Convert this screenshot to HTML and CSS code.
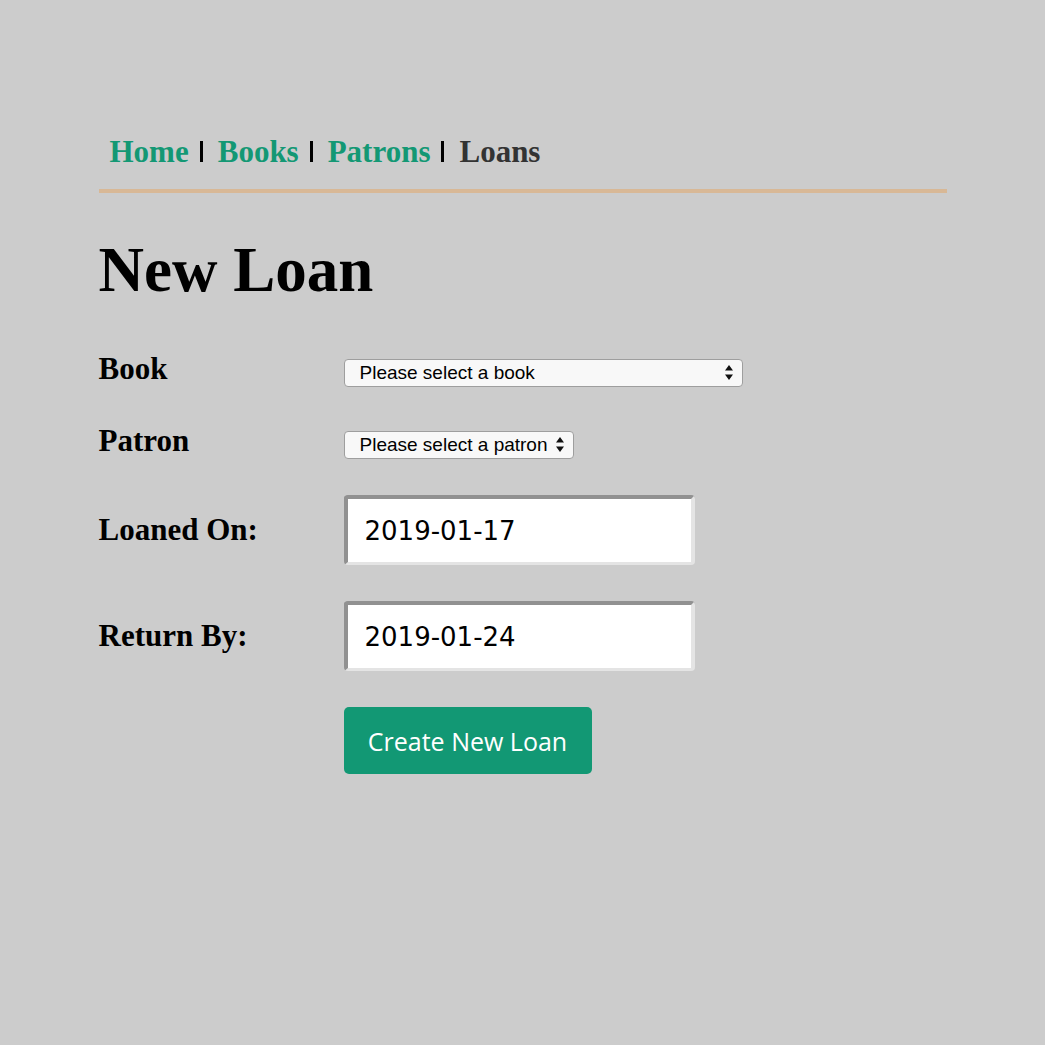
FILE: index.html
```html
<!DOCTYPE html>
<html lang="en">
<head>
<meta charset="utf-8">
<title>New Loan</title>
<link rel="stylesheet" href="styles.css">
</head>
<body>
<div class="container">
  <nav class="nav">
    <a class="nav-link" href="#">Home</a><span class="sep"></span>
    <a class="nav-link" href="#">Books</a><span class="sep"></span>
    <a class="nav-link" href="#">Patrons</a><span class="sep"></span>
    <a class="nav-link current" href="#">Loans</a>
  </nav>
  <h1 class="title">New Loan</h1>
  <form class="form">
    <label class="label" for="book">Book</label>
    <div class="field">
      <span class="select-wrap select-book">
        <select id="book" class="select"><option>Please select a book</option></select>
        <svg class="arrows" width="8" height="15" viewBox="0 0 8 15"><path d="M4 0 L8 5.5 L0 5.5 Z M0 9.5 L8 9.5 L4 15 Z" fill="#111"/></svg>
      </span>
    </div>
    <label class="label" for="patron">Patron</label>
    <div class="field">
      <span class="select-wrap select-patron">
        <select id="patron" class="select"><option>Please select a patron</option></select>
        <svg class="arrows" width="8" height="15" viewBox="0 0 8 15"><path d="M4 0 L8 5.5 L0 5.5 Z M0 9.5 L8 9.5 L4 15 Z" fill="#111"/></svg>
      </span>
    </div>
    <label class="label" for="loaned">Loaned On:</label>
    <div class="field"><input id="loaned" class="input" type="text" value="2019-01-17"></div>
    <label class="label" for="return">Return By:</label>
    <div class="field"><input id="return" class="input" type="text" value="2019-01-24"></div>
    <div class="field actions"><button class="button" type="button">Create New Loan</button></div>
  </form>
</div>
</body>
</html>
```

FILE: styles.css
```css
html, body {
  margin: 0;
  padding: 0;
  background: #cccccc;
}

body {
  font-family: "Liberation Serif", "Times New Roman", serif;
  color: #000;
}

.container {
  width: 848px;
  margin: 0 auto;
  padding-top: 134px;
}

.nav {
  display: flex;
  align-items: baseline;
  padding-left: 11px;
  padding-bottom: 19px;
  border-bottom: 4px solid #d8b896;
  font-size: 31px;
  line-height: 36px;
  font-weight: bold;
}

.nav-link {
  color: #139874;
  text-decoration: none;
}

.nav-link.current {
  color: #333333;
}

.sep {
  display: inline-block;
  width: 3px;
  height: 21px;
  background: #000;
  margin: 0 15px 0 11px;
}

.title {
  font-size: 63px;
  line-height: 63px;
  font-weight: bold;
  margin: 46px 0 0 0;
}

.form {
  display: grid;
  grid-template-columns: 245px 1fr;
  row-gap: 36px;
  align-items: baseline;
  margin-top: 49px;
}

.label {
  font-size: 31px;
  line-height: 36px;
  font-weight: bold;
}

.actions {
  grid-column: 2;
}

.select-wrap {
  position: relative;
  display: inline-block;
}

.select {
  -webkit-appearance: none;
  appearance: none;
  box-sizing: border-box;
  height: 28px;
  padding: 0 14px 0 15px;
  border: 1px solid #9e9e9e;
  border-radius: 4px;
  background: #f8f8f8;
  color: #000;
  font-family: "Liberation Sans", Arial, sans-serif;
  font-size: 19px;
  margin: 0;
}

.select-book .select {
  width: 399px;
}

.select-patron .select {
  width: 230px;
}

.arrows {
  position: absolute;
  top: 6px;
  right: 10px;
  pointer-events: none;
}

.input {
  box-sizing: border-box;
  width: 351px;
  height: 70px;
  margin: 0;
  padding: 0 17px;
  border-style: solid;
  border-width: 4px 4px 3px 4px;
  border-color: #919191 #e4e4e4 #e4e4e4 #919191;
  border-radius: 4px;
  background: #ffffff;
  color: #000;
  font-family: "DejaVu Sans", Verdana, sans-serif;
  font-size: 26px;
}

.button {
  box-sizing: border-box;
  width: 248px;
  height: 67px;
  margin: 0;
  padding: 0;
  border: none;
  border-radius: 5px;
  background: #129874;
  color: #ffffff;
  font-family: "Open Sans", "DejaVu Sans", sans-serif;
  font-size: 25px;
  font-weight: 500;
}
```
